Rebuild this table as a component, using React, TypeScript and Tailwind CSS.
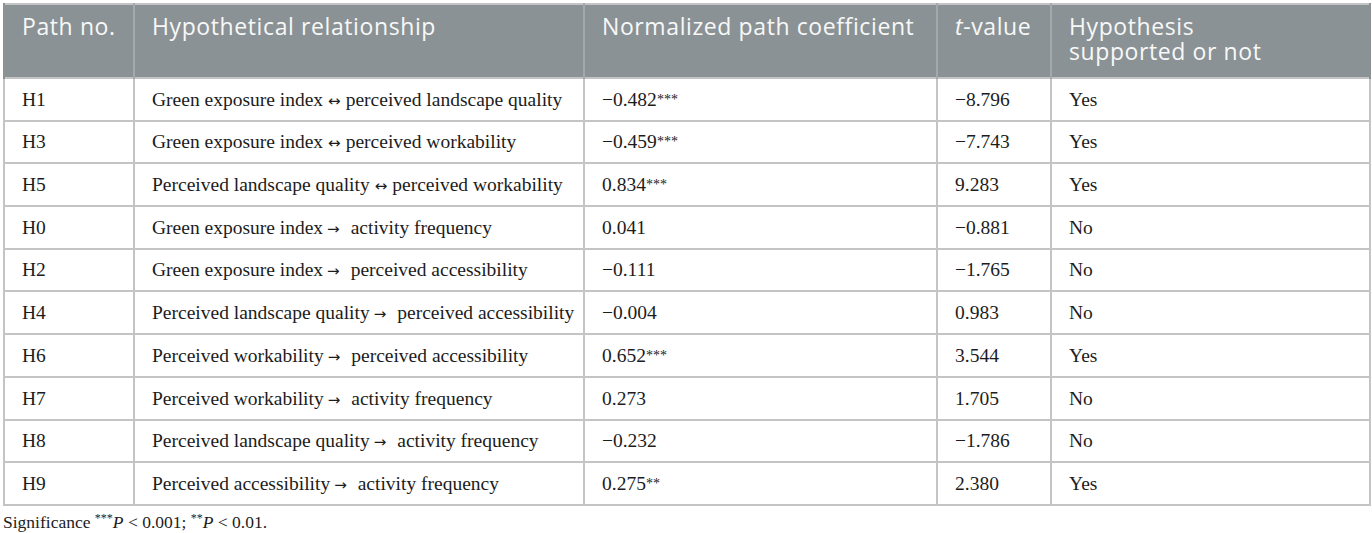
import React from "react";

type Row = { id: string; rel: React.ReactNode; coef: string; sig?: string; t: string; sup: string };

const Bi = () => (
  <span className="mx-[5px] text-[15px]" style={{ fontFamily: '"DejaVu Sans", sans-serif' }}>
    ↔
  </span>
);
const Ar = () => (
  <span className="ml-[4px] mr-[11px] text-[15px]" style={{ fontFamily: '"DejaVu Sans", sans-serif' }}>
    →
  </span>
);

const rows: Row[] = [
  { id: "H1", rel: <>Green exposure index<Bi />perceived landscape quality</>, coef: "−0.482", sig: "***", t: "−8.796", sup: "Yes" },
  { id: "H3", rel: <>Green exposure index<Bi />perceived workability</>, coef: "−0.459", sig: "***", t: "−7.743", sup: "Yes" },
  { id: "H5", rel: <>Perceived landscape quality<Bi />perceived workability</>, coef: "0.834", sig: "***", t: "9.283", sup: "Yes" },
  { id: "H0", rel: <>Green exposure index<Ar />activity frequency</>, coef: "0.041", t: "−0.881", sup: "No" },
  { id: "H2", rel: <>Green exposure index<Ar />perceived accessibility</>, coef: "−0.111", t: "−1.765", sup: "No" },
  { id: "H4", rel: <>Perceived landscape quality<Ar />perceived accessibility</>, coef: "−0.004", t: "0.983", sup: "No" },
  { id: "H6", rel: <>Perceived workability<Ar />perceived accessibility</>, coef: "0.652", sig: "***", t: "3.544", sup: "Yes" },
  { id: "H7", rel: <>Perceived workability<Ar />activity frequency</>, coef: "0.273", t: "1.705", sup: "No" },
  { id: "H8", rel: <>Perceived landscape quality<Ar />activity frequency</>, coef: "−0.232", t: "−1.786", sup: "No" },
  { id: "H9", rel: <>Perceived accessibility<Ar />activity frequency</>, coef: "0.275", sig: "**", t: "2.380", sup: "Yes" },
];

const th =
  "align-top text-left font-normal pl-[17px] pr-1 pt-[9px] pb-[8px] border-x-2 border-[#a3a9ac] text-[23px] leading-[25px] tracking-[0.6px] text-[#f7f8f8]";
const td = "h-[42.7px] pl-[17px] pr-2 border-2 border-[#c4c4c4] align-middle";

export default function App() {
  return (
    <div className="w-[1372px] h-[533px] bg-white pt-[3px] pl-[3px]">
      <table
        className="border-collapse table-fixed w-[1366px] border-2 border-[#c4c4c4] text-[#1c1c1c]"
        style={{ fontFamily: '"Liberation Serif", serif' }}
      >
        <colgroup>
          <col className="w-[130px]" />
          <col className="w-[450px]" />
          <col className="w-[353px]" />
          <col className="w-[114px]" />
          <col className="w-[319px]" />
        </colgroup>
        <thead>
          <tr className="bg-[#8b9295] h-[74px]" style={{ fontFamily: '"Open Sans", sans-serif' }}>
            <th className={th + " border-l-[#8b9295]"}>Path no.</th>
            <th className={th}>Hypothetical relationship</th>
            <th className={th}>Normalized path coefficient</th>
            <th className={th}>
              <span className="italic">t</span>-value
            </th>
            <th className={th + " border-r-[#8b9295]"}>
              Hypothesis
              <br />
              supported or not
            </th>
          </tr>
        </thead>
        <tbody className="text-[19.5px]">
          {rows.map((r) => (
            <tr key={r.id}>
              <td className={td}>{r.id}</td>
              <td className={td}>{r.rel}</td>
              <td className={td}>
                {r.coef}
                {r.sig && <sup className="text-[14px] relative top-[-2px]">{r.sig}</sup>}
              </td>
              <td className={td}>{r.t}</td>
              <td className={td}>{r.sup}</td>
            </tr>
          ))}
        </tbody>
      </table>
      <div
        className="mt-[3px] text-[17.5px] text-[#1c1c1c]"
        style={{ fontFamily: '"Liberation Serif", serif' }}
      >
        Significance <sup className="text-[12px]">***</sup>
        <span className="italic">P</span> &lt; 0.001; <sup className="text-[12px]">**</sup>
        <span className="italic">P</span> &lt; 0.01.
      </div>
    </div>
  );
}
